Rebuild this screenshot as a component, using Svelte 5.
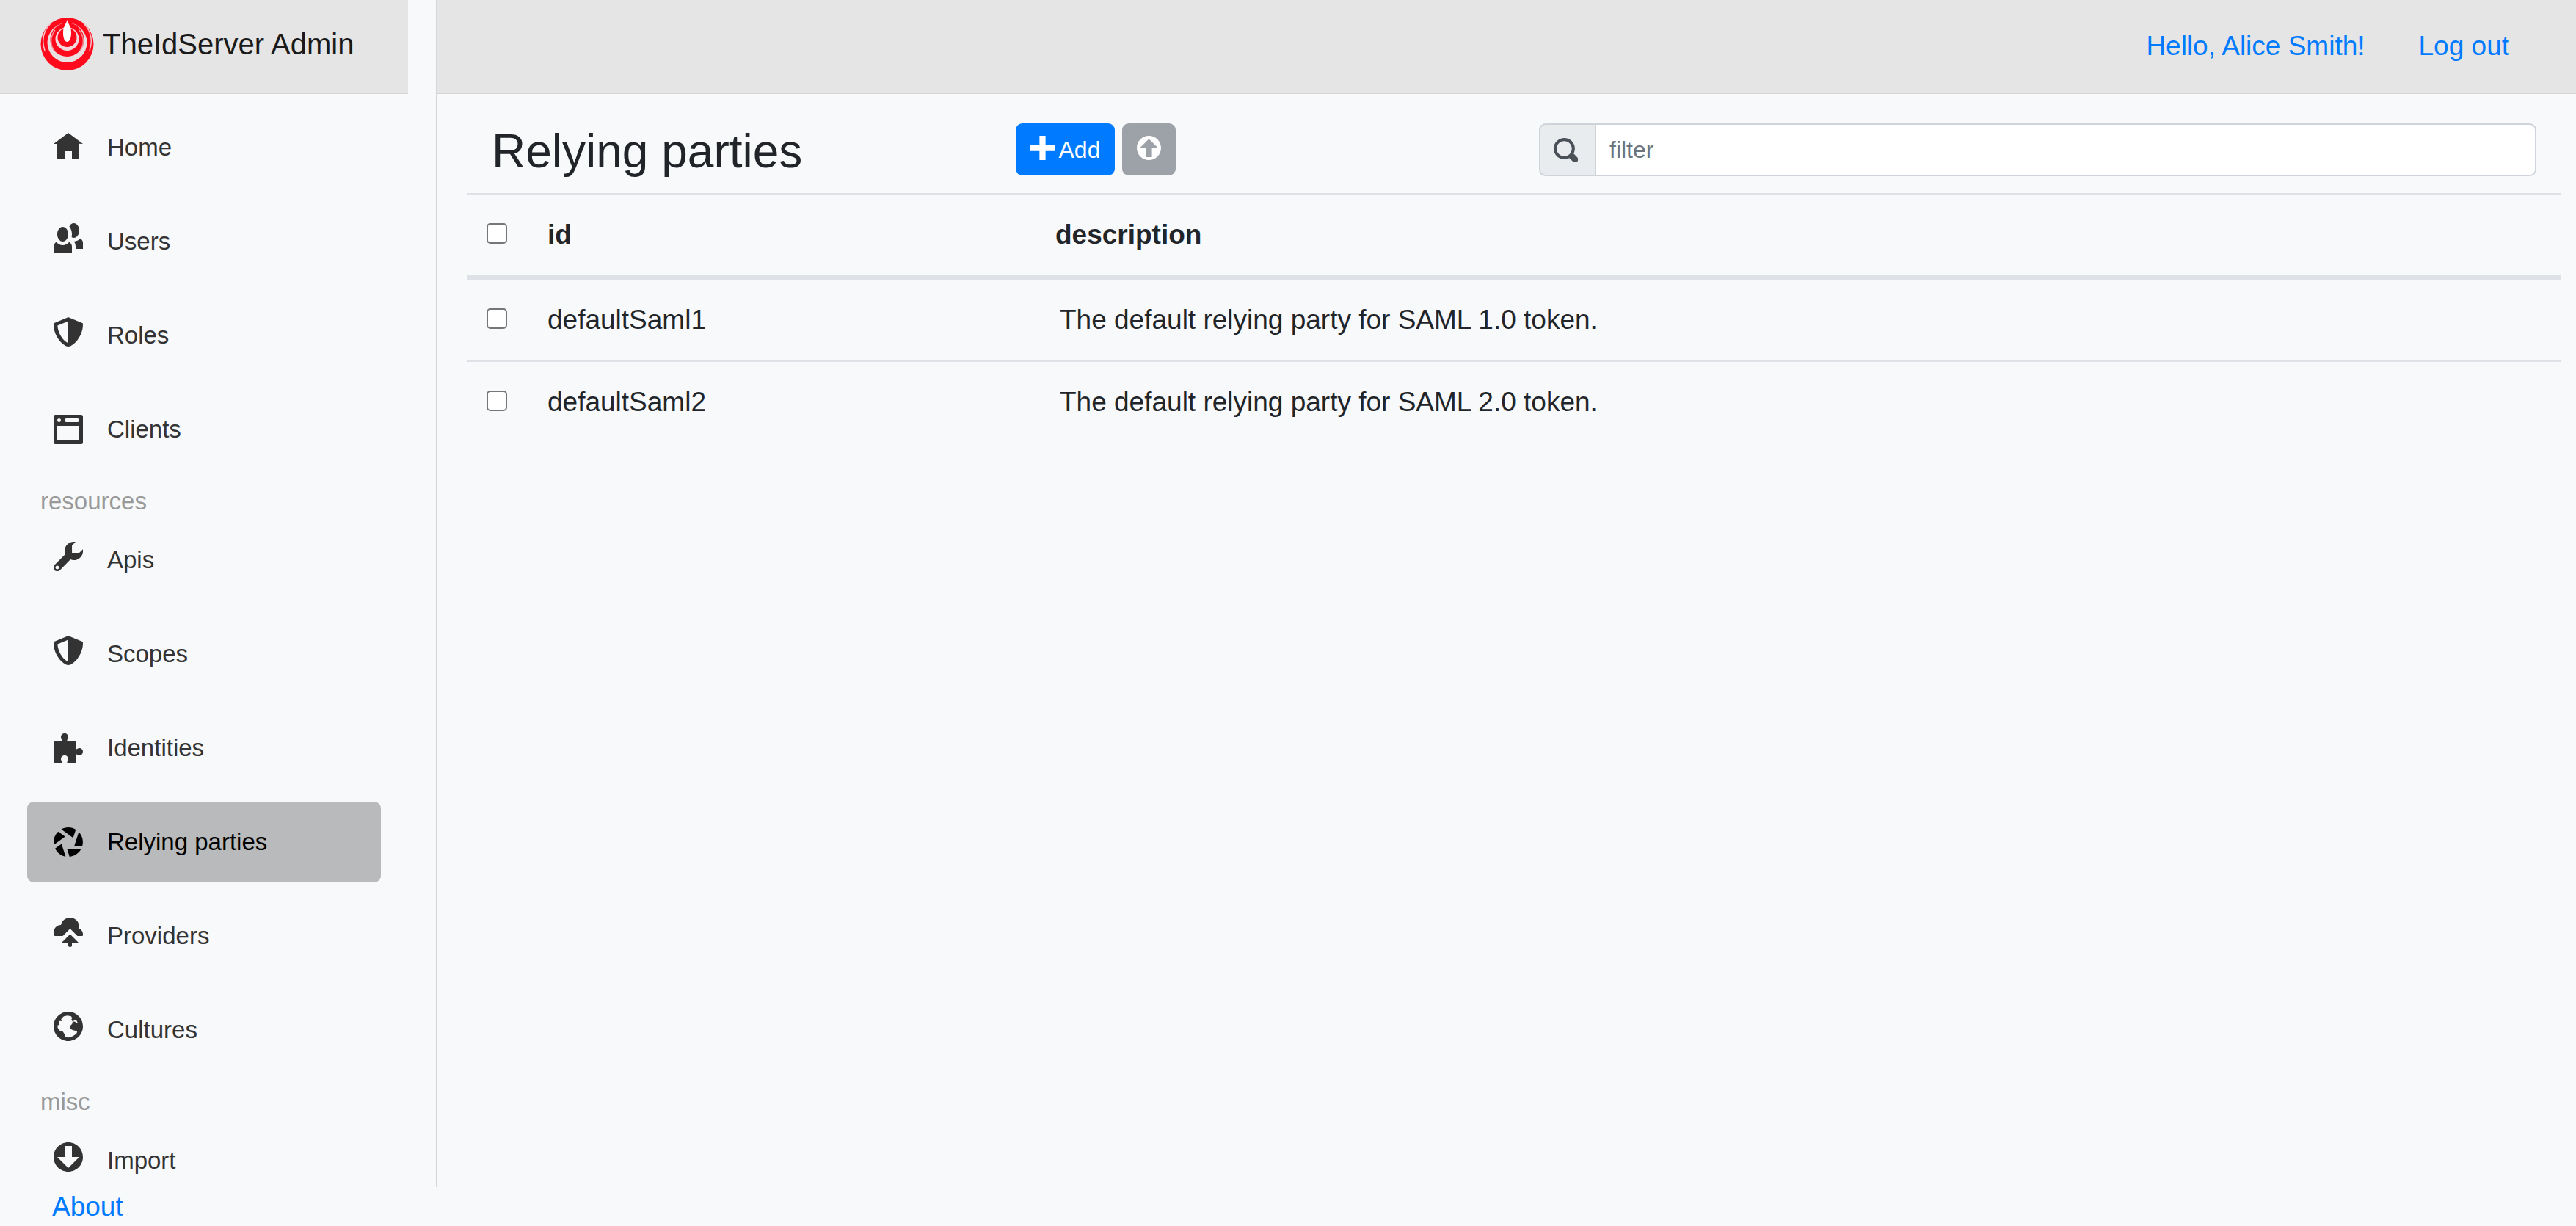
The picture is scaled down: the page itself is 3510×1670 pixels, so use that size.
<script>
  const icons = {
    home: { d: 'M4 0l-4 3h1v4h2v-2h2v2h2v-4.03l1 .03-4-3z', low: true },
    people: { d: 'M5.5 0c-.51 0-.95.35-1.22.88.45.54.72 1.28.72 2.13 0 .29-.03.55-.09.81.19.11.38.19.59.19.83 0 1.5-.9 1.5-2s-.67-2-1.5-2zm-3 1c-.83 0-1.5.9-1.5 2s.67 2 1.5 2 1.5-.9 1.5-2-.67-2-1.5-2zm4.75 3.16c-.43.51-1.02.82-1.69.84.27.38.44.84.44 1.34v.66h2v-1.66c0-.52-.31-.97-.75-1.19zm-6.5 1c-.44.22-.75.67-.75 1.19v1.66h5v-1.66c0-.52-.31-.97-.75-1.19-.45.53-1.06.84-1.75.84s-1.3-.32-1.75-.84z' },
    shield: { d: 'M4 0l-.19.09-3.5 1.47-.31.13v.31c0 1.66.67 3.12 1.47 4.19.4.53.83.97 1.25 1.28.42.31.83.53 1.28.53.46 0 .86-.22 1.28-.53.42-.31.85-.75 1.25-1.28.8-1.07 1.47-2.53 1.47-4.19v-.31l-.31-.13-3.5-1.47-.19-.09zm0 1.09v5.91c-.04 0-.33-.07-.66-.31s-.71-.63-1.06-1.09c-.64-.85-1.14-2.03-1.22-3.28l2.94-1.22z' },
    browser: { d: 'M.5 0a.5.5 0 0 0-.5.5v7a.5.5 0 0 0 .5.5h7a.5.5 0 0 0 .5-.5v-7a.5.5 0 0 0-.5-.5h-7zm1 1c.28 0 .5.22.5.5s-.22.5-.5.5-.5-.22-.5-.5.22-.5.5-.5zm2 0h3c.28 0 .5.22.5.5s-.22.5-.5.5h-3c-.28 0-.5-.22-.5-.5s.22-.5.5-.5zm-2.5 2h6v4h-6v-4z', low: true },
    wrench: { d: 'M5.5 0c-1.38 0-2.5 1.12-2.5 2.5 0 .32.08.62.19.91l-2.91 2.88c-.39.39-.39 1.05 0 1.44.2.2.46.28.72.28.26 0 .52-.09.72-.28l2.88-2.91c.28.11.58.19.91.19 1.38 0 2.5-1.12 2.5-2.5 0-.16 0-.32-.03-.47l-.97.97h-2v-2l.97-.97c-.15-.03-.31-.03-.47-.03zm-4.5 6.5c.28 0 .5.22.5.5s-.22.5-.5.5-.5-.22-.5-.5.22-.5.5-.5z' },
    puzzle: { d: 'M3 0c-.28 0-.54.1-.72.28-.18.18-.28.44-.28.72 0 .28.18.48.28.72.03.06.03.16.03.28h-2.31v6h2.31c0-.12 0-.22-.03-.28-.1-.24-.28-.44-.28-.72 0-.28.1-.54.28-.72.18-.18.44-.28.72-.28.28 0 .54.1.72.28.18.18.28.44.28.72 0 .28-.18.48-.28.72-.03.06-.03.16-.03.28h2.31v-2.31c.12 0 .22 0 .28.03.24.1.44.28.72.28.28 0 .54-.1.72-.28.18-.18.28-.44.28-.72 0-.28-.1-.54-.28-.72-.18-.18-.44-.28-.72-.28-.28 0-.48.18-.72.28-.06.03-.16.03-.28.03v-2.31h-2.31c0-.12 0-.22.03-.28.1-.24.28-.44.28-.72 0-.28-.1-.54-.28-.72-.18-.18-.44-.28-.72-.28z', low: true },
    aperture: { d: 'M4 0c-.69 0-1.34.19-1.91.5l3.22 2.34.75-2.25c-.6-.36-1.31-.59-2.06-.59zm-2.75 1.13c-.76.73-1.25 1.74-1.25 2.88 0 .25.02.48.06.72l3.09-2.22-1.91-1.38zm5.63.13l-1.22 3.75h2.19c.08-.32.13-.65.13-1 0-1.07-.41-2.03-1.09-2.75zm-4.72 3.22l-1.75 1.25c.55 1.13 1.6 1.99 2.88 2.22l-1.13-3.47zm1.56 1.53l.63 1.97c1.33-.12 2.46-.88 3.09-1.97h-3.72z', low: true },
    cloud: { d: 'M4.5 0c-1.21 0-2.27.86-2.5 2-1.1 0-2 .9-2 2 0 .37.11.71.28 1h2.22l2-2 2 2h1.41c.06-.16.09-.32.09-.5 0-.65-.42-1.29-1-1.5v-.5c0-1.38-1.12-2.5-2.5-2.5zm0 4.5l-2.5 2.5h2v.5a.5.5 0 1 0 1 0v-.5h2l-2.5-2.5z' },
    globe: { d: 'M4 0c-2.2 0-4 1.8-4 4s1.8 4 4 4 4-1.8 4-4-1.8-4-4-4zM2.3 1.7L2.8 1.25 3.8 1.05 4.8 1.25 5.05 1.8 4.85 2.2 5.2 2.7 5.05 3.35 4.5 3.9 4.6 4.7 5.3 5.05 6.45 5.3 6.25 6 5.3 6.65 4.15 7.05 3.15 6.9 2.95 6.1 2.55 5.45 1.65 5.15 1.1 4.35 1.1 3.7 1.65 3.6 1.4 3.1 1.65 2.55 2.3 2.55 2.05 2.05zM5.35 2.7L5.6 2.3 6.25 2.4 6.6 3.1 6.1 3.1 5.9 2.75z' },
    download: { d: 'M4 0c-2.2 0-4 1.8-4 4s1.8 4 4 4 4-1.8 4-4-1.8-4-4-4zm-1 1h2v3h2l-3 3-3-3h2v-3z' }
  };

  const groups = [
    {
      title: '',
      items: [
        { label: 'Home', icon: icons.home },
        { label: 'Users', icon: icons.people },
        { label: 'Roles', icon: icons.shield },
        { label: 'Clients', icon: icons.browser }
      ]
    },
    {
      title: 'resources',
      items: [
        { label: 'Apis', icon: icons.wrench },
        { label: 'Scopes', icon: icons.shield },
        { label: 'Identities', icon: icons.puzzle },
        { label: 'Relying parties', icon: icons.aperture, active: true },
        { label: 'Providers', icon: icons.cloud },
        { label: 'Cultures', icon: icons.globe }
      ]
    },
    { title: 'misc', items: [{ label: 'Import', icon: icons.download }] }
  ];

  const parties = [
    { id: 'defaultSaml1', description: 'The default relying party for SAML 1.0 token.' },
    { id: 'defaultSaml2', description: 'The default relying party for SAML 2.0 token.' }
  ];

  let filter = $state('');
  let selected = $state([]);
  let shown = $derived(
    parties.filter((p) => (p.id + ' ' + p.description).toLowerCase().includes(filter.toLowerCase()))
  );
  let all = $derived(selected.length === parties.length);

  function toggleAll() {
    selected = all ? [] : parties.map((p) => p.id);
  }
</script>

<div class="page">
  <div class="shell">
    <aside class="sidebar">
      <header class="bar brand">
        <svg class="logo" viewBox="0 0 73 72" aria-hidden="true">
          <circle cx="36.5" cy="36" r="36" fill="#ff0a1c" />
          <path d="M14 8C5 17 1 30 6 45M59 8c9 9 13 22 8 37" fill="none" stroke="#f3c3c8" stroke-width="1.5" />
          <circle cx="36.5" cy="34" r="27" fill="#e9dfe0" />
          <circle cx="36.5" cy="30" r="23" fill="#ff0a1c" />
          <path d="M20 17c-7 9-7 20-1 28M53 17c7 9 7 20 1 28" fill="none" stroke="#f58d97" stroke-width="1.5" />
          <circle cx="36.5" cy="29" r="16" fill="#f1dadd" />
          <circle cx="36.5" cy="27" r="13" fill="#ff0a1c" />
          <path d="M36.5 3c1 5 5.500 9 5.500 17s-2 13-5.500 13-5.500-5-5.500-13 4.500-12 5.500-17z" fill="#fff" />
        </svg>
        <a class="brand-name" href="#home">TheIdServer Admin</a>
      </header>
      <nav class="nav" aria-label="Main">
        {#each groups as group}
          {#if group.title}<div class="group">{group.title}</div>{/if}
          <ul>
            {#each group.items as item}
              <li>
                <a class="item" class:active={item.active} href={'#' + item.label} aria-current={item.active ? 'page' : undefined}>
                  <svg class="icon" viewBox="0 0 8 9" aria-hidden="true">
                    <path d={item.icon.d} transform={item.icon.low ? 'translate(0 1)' : undefined} />
                  </svg>
                  <span>{item.label}</span>
                </a>
              </li>
            {/each}
          </ul>
        {/each}
      </nav>
    </aside>

    <div class="main">
      <header class="bar account">
        <a href="#profile">Hello, Alice Smith!</a>
        <a href="#logout">Log out</a>
      </header>
      <main class="content">
        <div class="toolbar">
          <h1>Relying parties</h1>
          <div class="actions">
            <button class="btn primary" type="button">
              <svg viewBox="0 0 8 8" aria-hidden="true"><path d="M3 0v3h-3v2h3v3h2v-3h3v-2h-3v-3h-2z" /></svg>
              <span>Add</span>
            </button>
            <button class="btn secondary" type="button" disabled aria-label="Export">
              <svg viewBox="0 0 8 8" aria-hidden="true"><path d="M4 0c-2.2 0-4 1.8-4 4s1.8 4 4 4 4-1.8 4-4-1.8-4-4-4zm0 1l3 3h-2v3h-2v-3h-2l3-3z" /></svg>
            </button>
          </div>
          <div class="filter">
            <label for="filter" aria-label="Filter">
              <svg viewBox="0 0 8 8" aria-hidden="true"><path d="M3.5 0c-1.93 0-3.5 1.57-3.5 3.5s1.57 3.5 3.5 3.5c.59 0 1.17-.14 1.66-.41a1 1 0 0 0 .13.13l1 1a1.02 1.02 0 1 0 1.44-1.44l-1-1a1 1 0 0 0-.16-.13c.27-.49.44-1.06.44-1.66 0-1.93-1.55-3.5-3.5-3.5zm0 1c1.39 0 2.5 1.11 2.5 2.5 0 .66-.24 1.27-.66 1.72-.01.01-.02.02-.03.03a1 1 0 0 0-.13.13c-.44.4-1.04.63-1.69.63-1.39 0-2.5-1.11-2.5-2.5s1.11-2.5 2.5-2.5z" /></svg>
            </label>
            <input id="filter" type="text" placeholder="filter" bind:value={filter} />
          </div>
        </div>

        <table>
          <thead>
            <tr>
              <th class="check"><input type="checkbox" aria-label="Select all" checked={all} onchange={toggleAll} /></th>
              <th class="id" scope="col">id</th>
              <th scope="col">description</th>
            </tr>
          </thead>
          <tbody>
            {#each shown as party (party.id)}
              <tr>
                <td class="check"><input type="checkbox" aria-label={'Select ' + party.id} value={party.id} bind:group={selected} /></td>
                <td>{party.id}</td>
                <td class="text">{party.description}</td>
              </tr>
            {/each}
          </tbody>
        </table>
      </main>
    </div>
  </div>
  <footer><a href="#about">About</a></footer>
</div>

<style>
  :global(body) {
    background: #f8f9fb;
  }

  .page {
    display: flex;
    flex-direction: column;
    height: 100vh;
    overflow: hidden;
    color: #212529;
    font: 37px/56px "Liberation Sans", Arial, sans-serif;
  }

  .page * {
    box-sizing: border-box;
  }

  a {
    color: #007bff;
    text-decoration: none;
  }

  .shell {
    display: flex;
    flex: 1;
    min-height: 0;
    gap: 38px;
  }

  .sidebar {
    display: flex;
    flex: none;
    flex-direction: column;
    width: 556px;
  }

  .bar {
    display: flex;
    flex: none;
    align-items: center;
    height: 128px;
    border-bottom: 2px solid #d5d5d5;
    background: #e5e5e5;
  }

  .brand {
    gap: 12px;
    padding: 0 0 6px 55px;
  }

  .logo {
    width: 73px;
    height: 72px;
  }

  .brand-name {
    color: #1a1a1a;
    font-size: 40px;
  }

  .nav {
    flex: 1;
    min-height: 0;
    padding: 18px 37px 0;
    overflow-y: auto;
    scrollbar-width: none;
    font-size: 33px;
  }

  ul {
    margin: 0;
    padding: 0;
    list-style: none;
  }

  li {
    padding-bottom: 18px;
  }

  .group {
    padding-left: 18px;
    color: #999;
    line-height: 50px;
  }

  .item {
    display: flex;
    height: 110px;
    gap: 33px;
    padding: 30px 36px;
    border-radius: 9px;
    color: #333;
  }

  .item.active {
    background: #b9babb;
    color: #000;
  }

  .item span {
    line-height: 50px;
  }

  .icon {
    flex: none;
    width: 40px;
    height: 45px;
  }

  svg {
    display: block;
    fill: currentColor;
    fill-rule: evenodd;
  }

  .main {
    flex: 1;
    min-width: 0;
    border-left: 2px solid #d5d5d5;
  }

  .account {
    justify-content: flex-end;
    gap: 73px;
    padding: 0 91px 0 0;
  }

  .content {
    padding: 40px 20px 0 40px;
  }

  .toolbar {
    display: grid;
    grid-template-columns: 1fr 1fr 2fr;
    padding-bottom: 19px;
  }

  .toolbar > * {
    padding: 0 34px;
  }

  h1 {
    margin: 0;
    font-size: 64px;
    font-weight: 400;
    line-height: 76px;
  }

  .actions {
    display: flex;
    gap: 10px;
  }

  .btn {
    display: flex;
    align-items: center;
    height: 71px;
    gap: 6px;
    padding: 0 20px;
    border: 0;
    border-radius: 9px;
    color: #fff;
    font: inherit;
    font-size: 32px;
  }

  .btn svg,
  .filter svg {
    width: 33px;
    height: 33px;
  }

  .btn svg {
    margin-bottom: 4px;
  }

  .primary {
    background: #007bff;
  }

  .secondary {
    background: #9da2a8;
  }

  .filter {
    display: flex;
    height: 72px;
  }

  .filter label {
    display: flex;
    align-items: center;
    width: 76px;
    padding-left: 18px;
    border: 2px solid #ced4da;
    border-right: 0;
    border-radius: 9px 0 0 9px;
    background: #e9ecef;
    color: #495057;
  }

  .filter input {
    flex: 1;
    min-width: 0;
    padding: 0 18px;
    border: 2px solid #ced4da;
    border-radius: 0 9px 9px 0;
    background: #fff;
    color: #495057;
    font: inherit;
    font-size: 32px;
  }

  .filter input::placeholder {
    color: #6c757d;
    opacity: 1;
  }

  table {
    width: 100%;
    border-spacing: 0;
    table-layout: fixed;
  }

  th,
  td {
    padding: 27px;
    border-top: 2px solid #dee2e6;
    text-align: left;
    vertical-align: top;
  }

  th {
    border-bottom: 6px solid #dee2e6;
  }

  tbody tr:first-child td {
    border-top: 0;
  }

  .check {
    width: 83px;
    padding-right: 0;
  }

  .id {
    width: 692px;
  }

  .text {
    padding-left: 33px;
  }

  .check input {
    display: block;
    width: 28px;
    height: 28px;
    margin: 12px 0 0;
    border: 2px solid #767676;
    border-radius: 5px;
    appearance: none;
    background: #fff;
  }

  .check input:checked {
    background: #007bff;
  }

  footer {
    flex: none;
    padding-left: 71px;
    line-height: 53px;
  }
</style>
